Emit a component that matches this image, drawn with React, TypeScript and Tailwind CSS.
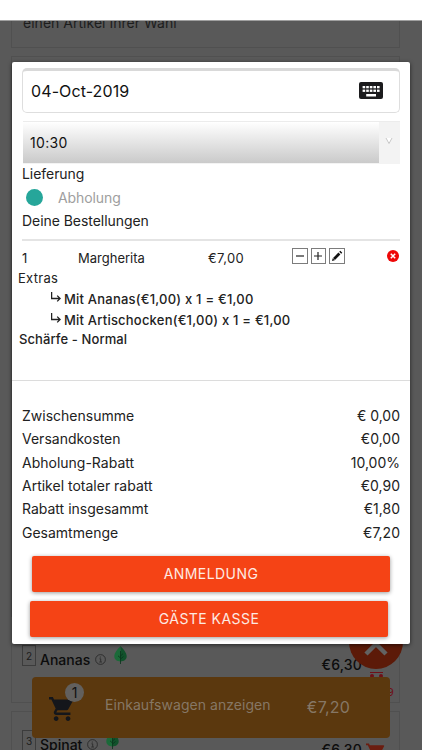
import type { ReactNode } from "react";

const totals = [
  { label: "Zwischensumme", value: "€ 0,00" },
  { label: "Versandkosten", value: "€0,00" },
  { label: "Abholung-Rabatt", value: "10,00%" },
  { label: "Artikel totaler rabatt", value: "€0,90" },
  { label: "Rabatt insgesammt", value: "€1,80" },
  { label: "Gesamtmenge", value: "€7,20" },
];

const extras = [
  "Mit Ananas(€1,00) x 1 = €1,00",
  "Mit Artischocken(€1,00) x 1 = €1,00",
];

function KeyboardIcon() {
  return (
    <svg width="24" height="17" viewBox="0 0 24 17" className="shrink-0 -mt-[3px]">
      <rect width="24" height="17" rx="2" fill="#1b1b1d" />
      <g fill="#fff">
        {[3.6, 7.2, 10.8, 14.4, 18].map((x) => (
          <g key={x}>
            <rect x={x} y="4" width="2.6" height="2.3" />
            <rect x={x} y="7.6" width="2.6" height="2.3" />
          </g>
        ))}
        <rect x="7.2" y="12" width="9.8" height="2.5" />
      </g>
    </svg>
  );
}

function CartIcon({ className }: { className: string }) {
  return (
    <svg viewBox="1 2 21 20" className={className} fill="currentColor">
      <path d="M7 18c-1.1 0-1.99.9-1.99 2S5.9 22 7 22s2-.9 2-2-.9-2-2-2zM1 2v2h2l3.6 7.59-1.35 2.45c-.16.28-.25.61-.25.96 0 1.1.9 2 2 2h12v-2H7.42c-.14 0-.25-.11-.25-.25l.03-.12.9-1.63h7.45c.75 0 1.41-.41 1.75-1.03l3.58-6.49A1 1 0 0 0 20 4H5.21l-.94-2H1zm16 16c-1.1 0-1.99.9-1.99 2s.89 2 1.99 2 2-.9 2-2-.9-2-2-2z" />
    </svg>
  );
}

function LeafIcon() {
  return (
    <svg width="13" height="18" viewBox="0 0 13 18">
      <path d="M6.500 0C4 3 .3 6.500.3 10.300c0 3.200 2.700 5.200 6.200 5.200z" fill="#1b6a39" />
      <path d="M6.500 0C9 3 12.700 6.500 12.700 10.300c0 3.200-2.700 5.200-6.200 5.200z" fill="#11512b" />
      <path d="M6.500 5v13M6.500 10l2.500-2.300M6.500 13l3-2.500M6.500 12L4 9.800" stroke="#08341a" strokeWidth="0.8" fill="none" />
    </svg>
  );
}

function InfoIcon() {
  return (
    <svg width="11" height="11" viewBox="0 0 11 11" fill="none" stroke="#262626" strokeWidth="0.8">
      <circle cx="5.500" cy="5.500" r="4.900" />
      <path d="M4.500 4.800h1.200v3M4.300 8h2.700M5.300 2.500v1.100" />
    </svg>
  );
}

function SquareButton({ children }: { children: ReactNode }) {
  return (
    <button className="w-[15.500px] h-4 border border-[#7c7c7c] flex items-center justify-center">
      <svg width="12" height="12" viewBox="0 0 12 12" fill="none" stroke="#222" strokeWidth="1.200">
        {children}
      </svg>
    </button>
  );
}

function MenuItem({ no, name }: { no: number; name: string }) {
  return (
    <div className="flex items-start pl-[10px]">
      <span className="w-[14px] h-[21px] border border-[#3c3c3c] text-[10px] leading-[20px] text-center text-[#1c1c1c]">
        {no}
      </span>
      <span className="ml-[4px] mt-[5px] text-[14px] leading-5 font-medium text-[#0c0c0c]">{name}</span>
      <span className="ml-[5px] mt-[9px]"><InfoIcon /></span>
      <span className="ml-[8px] mt-px"><LeafIcon /></span>
      <span className="ml-auto mt-[10px] text-[14px] leading-5 font-medium tracking-[0.2px] text-[#0c0c0c]">€6,30</span>
    </div>
  );
}

function Backdrop() {
  return (
    <div className="h-[730px] bg-[#595959] border-t border-[#a0a0a0] pl-[11px] pr-[22px] overflow-hidden">
      <div className="flow-root h-[27px] border-x border-b border-[#505050] pl-[11px]">
        <p className="text-[14px] leading-[18px] -mt-[7px] tracking-[0.020px] text-[#1d1d1d]">einen Artikel Ihrer Wahl</p>
      </div>
      <div className="h-[561px] mt-[8px] border border-b-0 border-[#505050]" />
      <div className="mt-[28px] h-[58px] border-x border-b border-[#505050] pr-[37px]">
        <MenuItem no={2} name="Ananas" />
      </div>
      <div className="mt-[8px] h-[60px] border border-[#505050] pr-[37px] pt-[18px]">
        <MenuItem no={3} name="Spinat" />
      </div>
    </div>
  );
}

function CartBar() {
  return (
    <>
      <CartIcon className="absolute left-[366px] top-[743px] w-[19px] h-[19px] text-[#6b1d10]" />
      <span className="absolute left-[387px] top-[685px] text-[11px] leading-[14px] text-[#6e1018]">9</span>
      <div className="absolute left-[370px] top-[672px] w-[13px] h-[5px] border-t border-[#6e1018] flex justify-between pt-px">
        <i className="w-1 h-1 rounded-full bg-[#6e1018]" />
        <i className="w-1 h-1 rounded-full bg-[#6e1018]" />
      </div>
      <div className="absolute left-[349px] top-[615px] w-[54px] h-[54px] rounded-full bg-[#5c1a08]">
        <svg viewBox="0 0 54 54" className="w-full h-full" stroke="#626262" strokeWidth="4.500">
          <path d="M17 19L37 39M37 19L17 39" />
        </svg>
      </div>
      <div className="absolute left-8 top-[677px] w-[358px] h-[61px] rounded bg-[#5b380e] flex items-center">
        <CartIcon className="ml-[17px] mt-[2px] w-[25px] h-[26px] text-[#14161b]" />
        <span className="ml-[31px] -mt-[6px] text-[14px] tracking-[0.040px] text-[#867765]">Einkaufswagen anzeigen</span>
        <span className="ml-auto mr-[40px] -mt-[2px] text-[16px] tracking-[0.2px] text-[#867765]">€7,20</span>
      </div>
      <span className="absolute left-[65px] top-[683px] w-[19px] h-[19px] rounded-full bg-[#62605e] text-[14px] leading-[19px] text-center text-[#111]">
        1
      </span>
    </>
  );
}

function OrderModal() {
  return (
    <div className="absolute left-[12px] top-[62px] w-[398px] h-[582px] bg-white rounded-[2px] shadow-[0_1px_4px_rgba(0,0,0,0.6)] text-[#222]">
      {/* Date and time */}
      <div className="ml-[10px] pt-[6px] w-[378px]">
        <div className="h-[45px] border border-[#dedede] border-t-[3px] border-t-[#d9d9d9] rounded-[5px] flex items-center justify-between pl-[8px] pr-[16px]">
          <span className="-mt-[2px] text-[16px] tracking-[0.1px] text-[#111]">04-Oct-2019</span>
          <KeyboardIcon />
        </div>
        <div className="ml-px mt-[8px] h-[43px] flex bg-[#f3f3f3] border-t border-[#ececec]">
          <div className="w-[356px] h-[41px] pl-[7px] flex items-center bg-linear-to-b from-white to-[#cacaca] text-[14px] tracking-[0.3px] text-[#111]">
            10:30
          </div>
          <svg width="21" height="42" viewBox="0 0 21 42" fill="#fff" stroke="#bbb" strokeWidth="0.8">
            <path d="M7 16L10 21.500L13 16" />
          </svg>
        </div>
      </div>

      {/* Delivery type */}
      <div className="ml-[10px] w-[378px] text-[14px]">
        <p className="h-[21px] leading-[20px] tracking-[-0.050px]">Lieferung</p>
        <div className="h-[25px] flex items-center">
          <span className="ml-[4px] w-[17px] h-[17px] rounded-full bg-[#26a69a]" />
          <span className="ml-[15px] tracking-[-0.1px] text-[#9e9e9e]">Abholung</span>
        </div>
        <p className="h-[21px] leading-[21px] tracking-[-0.050px]">Deine Bestellungen</p>
        <div className="mt-[8px] h-[2px] bg-[#e4e4e4]" />
      </div>

      {/* Ordered item */}
      <div className="ml-[10px] w-[378px] h-[28px] pt-[6px] flex text-[13px] leading-[22px]">
        <span className="w-[56px]">1</span>
        <span className="w-[130px]">Margherita</span>
        <span className="w-[84px] tracking-[0.4px]">€7,00</span>
        <div className="flex gap-[3px] pt-px">
          <SquareButton><path d="M2 6h8" /></SquareButton>
          <SquareButton><path d="M2 6h8M6 2v8" /></SquareButton>
          <SquareButton>
            <path d="M1 11l.7-2.800 2.100 2.100z" fill="#111" stroke="none" />
            <path d="M3 9L8.400 3.600M9.200 2.800L10.300 1.700" stroke="#111" strokeWidth="2.800" />
          </SquareButton>
        </div>
        <svg width="12" height="12" viewBox="0 0 12 12" className="ml-auto mr-[1.500px] mt-[2.500px]">
          <circle cx="6" cy="6" r="6" fill="#ee0808" />
          <path d="M3.800 3.800l4.400 4.400M8.200 3.800L3.800 8.200" stroke="#fff" strokeWidth="1.500" />
        </svg>
      </div>
      <div className="ml-[6px] text-[13px]">
        <p className="h-[20px] leading-[19px] tracking-[0.3px]">Extras</p>
        {extras.map((extra) => (
          <p key={extra} className="h-[20.500px] pt-px pl-[33px] flex items-center font-medium tracking-[0.210px]">
            <svg width="10" height="11" viewBox="0 0 10 11" fill="none" stroke="#222" strokeWidth="1.300" className="mr-[3px] -mt-[4px]">
              <path d="M.6 0v6.500h8.400M6.200 3.600L9.100 6.500L6.200 9.400" />
            </svg>
            {extra}
          </p>
        ))}
        <p className="h-[19px] leading-[19px] font-medium pl-px tracking-[0.1px]">Schärfe - Normal</p>
      </div>

      {/* Totals */}
      <div className="mt-[31px] border-t border-[#dcdcdc] pt-[22.500px] pb-[0.500px] pl-[10px] pr-[10px] text-[14px]">
        {totals.map((row) => (
          <div key={row.label} className="h-[23.450px] flex items-center justify-between">
            <span>{row.label}</span>
            <span>{row.value}</span>
          </div>
        ))}
      </div>

      {/* Actions */}
      <div className="flex flex-col gap-[9px] pt-[11px] text-[14px] tracking-[0.450px] text-[#fdeae3]">
        <button className="ml-[20px] w-[358px] h-[36px] rounded-[2px] bg-[#f54315] shadow-[0_1px_4px_rgba(0,0,0,0.4)]">
          ANMELDUNG
        </button>
        <button className="ml-[18px] w-[358px] h-[36px] rounded-[2px] bg-[#f54315] shadow-[0_1px_4px_rgba(0,0,0,0.4)]">
          GÄSTE KASSE
        </button>
      </div>
    </div>
  );
}

export default function App() {
  return (
    <div className="relative w-[422px] h-[750px] overflow-hidden bg-white font-['Inter','Liberation_Sans',sans-serif]">
      <div className="h-[20px]" />
      <Backdrop />
      <CartBar />
      <OrderModal />
    </div>
  );
}
